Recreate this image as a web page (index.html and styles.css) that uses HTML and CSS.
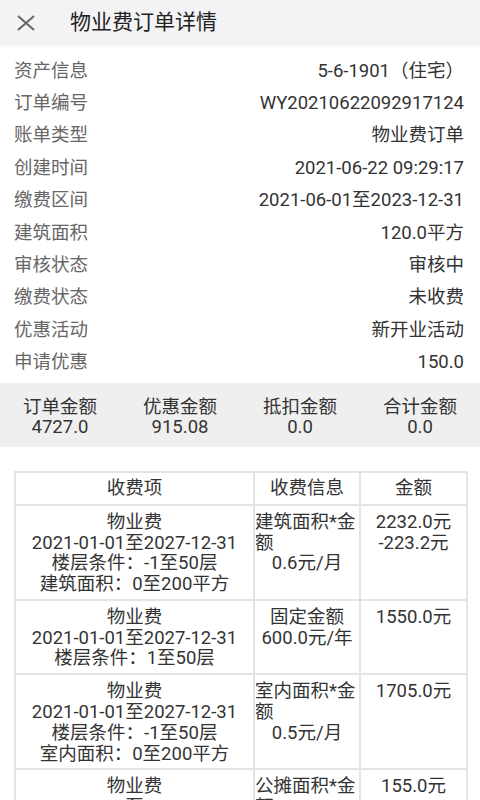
FILE: index.html
```html
<!DOCTYPE html>
<html lang="zh-CN">
<head>
  <meta charset="UTF-8" />
  <meta name="viewport" content="width=device-width, initial-scale=1.0" />
  <title>物业费订单详情</title>
  <link rel="stylesheet" href="styles.css">
</head>
<body>
  <div class="topbar">
    <svg class="close" width="18" height="16" viewBox="0 0 18 16">
      <path d="M1 1 L17 15 M17 1 L1 15" stroke="#666" stroke-width="2" fill="none" />
    </svg>
    <h1>物业费订单详情</h1>
  </div>

  <div class="info">
    <div class="row"><span class="label">资产信息</span><span class="value">5-6-1901（住宅）</span></div>
    <div class="row"><span class="label">订单编号</span><span class="value">WY20210622092917124</span></div>
    <div class="row"><span class="label">账单类型</span><span class="value">物业费订单</span></div>
    <div class="row"><span class="label">创建时间</span><span class="value">2021-06-22 09:29:17</span></div>
    <div class="row"><span class="label">缴费区间</span><span class="value">2021-06-01至2023-12-31</span></div>
    <div class="row"><span class="label">建筑面积</span><span class="value">120.0平方</span></div>
    <div class="row"><span class="label">审核状态</span><span class="value">审核中</span></div>
    <div class="row"><span class="label">缴费状态</span><span class="value">未收费</span></div>
    <div class="row"><span class="label">优惠活动</span><span class="value">新开业活动</span></div>
    <div class="row"><span class="label">申请优惠</span><span class="value">150.0</span></div>
  </div>

  <div class="summary">
    <div class="sum-item"><div>订单金额</div><div>4727.0</div></div>
    <div class="sum-item"><div>优惠金额</div><div>915.08</div></div>
    <div class="sum-item"><div>抵扣金额</div><div>0.0</div></div>
    <div class="sum-item"><div>合计金额</div><div>0.0</div></div>
  </div>

  <table class="fees">
    <colgroup>
      <col class="c1"><col class="c2"><col class="c3">
    </colgroup>
    <thead>
      <tr><th>收费项</th><th>收费信息</th><th>金额</th></tr>
    </thead>
    <tbody>
      <tr>
        <td>物业费<br>2021-01-01至2027-12-31<br>楼层条件：-1至50层<br>建筑面积：0至200平方</td>
        <td><div class="rule">建筑面积*金额</div><div>0.6元/月</div></td>
        <td>2232.0元<br>-223.2元</td>
      </tr>
      <tr>
        <td>物业费<br>2021-01-01至2027-12-31<br>楼层条件：1至50层</td>
        <td><div>固定金额</div><div>600.0元/年</div></td>
        <td>1550.0元</td>
      </tr>
      <tr>
        <td>物业费<br>2021-01-01至2027-12-31<br>楼层条件：-1至50层<br>室内面积：0至200平方</td>
        <td><div class="rule">室内面积*金额</div><div>0.5元/月</div></td>
        <td>1705.0元</td>
      </tr>
      <tr>
        <td>物业费<br>2021-01-01至2027-12-31<br>楼层条件：-1至50层<br>公摊面积：0至200平方</td>
        <td><div class="rule">公摊面积*金额</div><div>0.5元/月</div></td>
        <td>155.0元</td>
      </tr>
    </tbody>
  </table>
</body>
</html>
```

FILE: styles.css
```css
body {
  margin: 0;
  font-family: Roboto, "Noto Sans CJK SC", sans-serif;
  font-size: 18.5px;
  color: #333;
  background: #fff;
}

.topbar {
  height: 45px;
  display: flex;
  align-items: center;
  background-color: #f3f3f5;
  box-shadow: 0 1px 3px rgba(0, 0, 0, 0.06);
}

.topbar .close {
  margin-left: 17px;
  flex-shrink: 0;
}

.topbar h1 {
  margin: 0 0 0 35px;
  font-size: 21px;
  font-weight: normal;
  line-height: 1.2;
  color: #222;
}

.info {
  padding: 9.5px 0 4.5px;
}

.row {
  display: flex;
  justify-content: space-between;
  align-items: center;
  height: 32.4px;
  padding: 0 16px 0 14px;
  line-height: 22px;
}

.label {
  color: #666;
}

.value {
  color: #333;
}

.summary {
  display: grid;
  grid-template-columns: repeat(4, 1fr);
  background-color: #efefef;
  padding: 14px 0 9px;
  line-height: 20.5px;
  text-align: center;
  color: #333;
}

.fees {
  margin: 24px 14px 0;
  width: 452px;
  border-collapse: collapse;
  table-layout: fixed;
  line-height: 20.8px;
}

.fees col.c1 { width: 239px; }
.fees col.c2 { width: 106px; }
.fees col.c3 { width: 107px; }

.fees th,
.fees td {
  border: 2px solid #e4e4e4;
  text-align: center;
  vertical-align: top;
  font-weight: normal;
}

.fees th {
  padding: 5px 0;
}

.fees td {
  padding: 6px 0 4px;
}

.fees .rule {
  text-align: left;
}
```
